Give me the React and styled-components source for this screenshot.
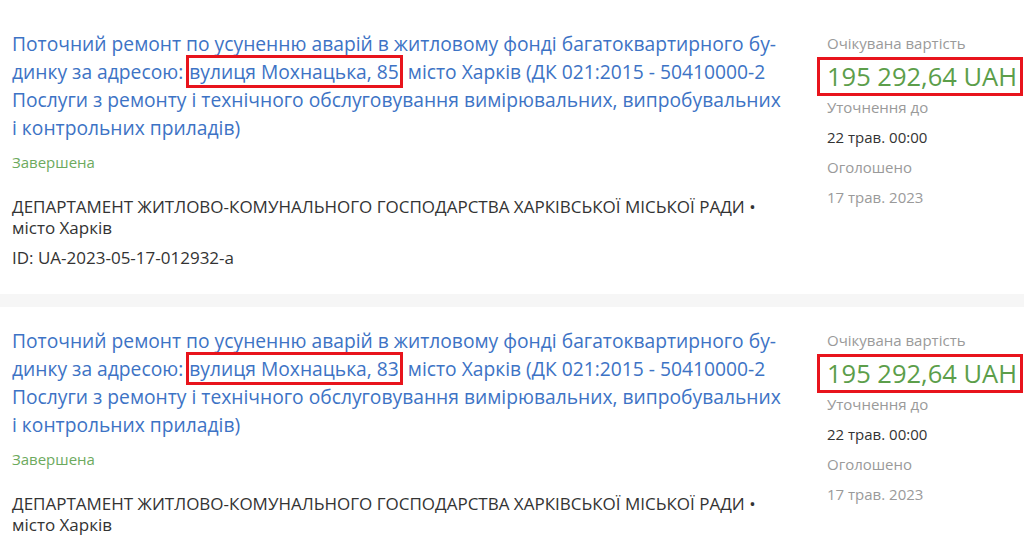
import React from 'react';
import styled, {createGlobalStyle} from 'styled-components';

const GlobalStyle = createGlobalStyle`
    body {
        margin: 0;
        background: #fff;
        font-family: "Open Sans", "Noto Sans", sans-serif;
        overflow: hidden;
    }
`

const List = styled.div`
    display: flex;
    flex-direction: column;
    padding-top: 10px;
`

const Card = styled.div`
    display: flex;
    flex-direction: row;
    padding: 20px 0 25px 0;
`

const Divider = styled.div`
    height: 13px;
    background: #f6f6f6;
`

const Main = styled.div`
    flex: 1;
    padding-left: 12px;
    display: flex;
    flex-direction: column;
`

const Title = styled.a`
    color: #3d73c5;
    font-size: 19.25px;
    line-height: 28px;
    text-decoration: none;
    white-space: nowrap;
`

const Marked = styled.span`
    border: 3px solid #e8141c;
    padding: 0 1px 0 0;
    margin-left: -2px;
`

const Status = styled.div`
    color: #6daa5e;
    font-size: 15px;
    margin-top: 10px;
`

const Buyer = styled.div`
    color: #333;
    font-size: 17px;
    line-height: 21px;
    margin-top: 24px;
`

const Ident = styled.div`
    color: #333;
    font-size: 17px;
    margin-top: 8px;
`

const Side = styled.div`
    width: 197px;
    display: flex;
    flex-direction: column;
    margin-top: -2px;
`

const Label = styled.div`
    color: ${p => p.$dark ? '#333' : '#9a9a9a'};
    font-size: 15px;
    line-height: 30px;
`

const Price = styled.div`
    align-self: flex-start;
    margin: -1px 0 -4px -10px;
    border: 3px solid #e8141c;
    padding: 0 3px 0 7px;
    color: #5c9e4a;
    font-size: 25.5px;
    line-height: 33px;
    white-space: nowrap;
`

const tenders = [
    {street: 'вулиця Мохнацька, 85', id: 'UA-2023-05-17-012932-a'},
    {street: 'вулиця Мохнацька, 83', id: 'UA-2023-05-17-012931-a'},
];

function Tender({street, id}) {
    return (
        <Card>
            <Main>
                <Title href="#">
                    Поточний ремонт по усуненню аварій в житловому фонді багатоквартирного бу-<br/>
                    динку за адресою: <Marked>{street}</Marked> місто Харків (ДК 021:2015 - 50410000-2<br/>
                    Послуги з ремонту і технічного обслуговування вимірювальних, випробувальних<br/>
                    і контрольних приладів)
                </Title>
                <Status>Завершена</Status>
                <Buyer>
                    ДЕПАРТАМЕНТ ЖИТЛОВО-КОМУНАЛЬНОГО ГОСПОДАРСТВА ХАРКІВСЬКОЇ МІСЬКОЇ РАДИ •<br/>
                    місто Харків
                </Buyer>
                <Ident>ID: {id}</Ident>
            </Main>
            <Side>
                <Label>Очікувана вартість</Label>
                <Price>195 292,64 UAH</Price>
                <Label>Уточнення до</Label>
                <Label $dark>22 трав. 00:00</Label>
                <Label>Оголошено</Label>
                <Label>17 трав. 2023</Label>
            </Side>
        </Card>
    );
}

export default function App() {
    return (
        <>
            <GlobalStyle/>
            <List>
                {tenders.map((t, i) => (
                    <React.Fragment key={t.street}>
                        {i > 0 && <Divider/>}
                        <Tender {...t}/>
                    </React.Fragment>
                ))}
            </List>
        </>
    );
}
